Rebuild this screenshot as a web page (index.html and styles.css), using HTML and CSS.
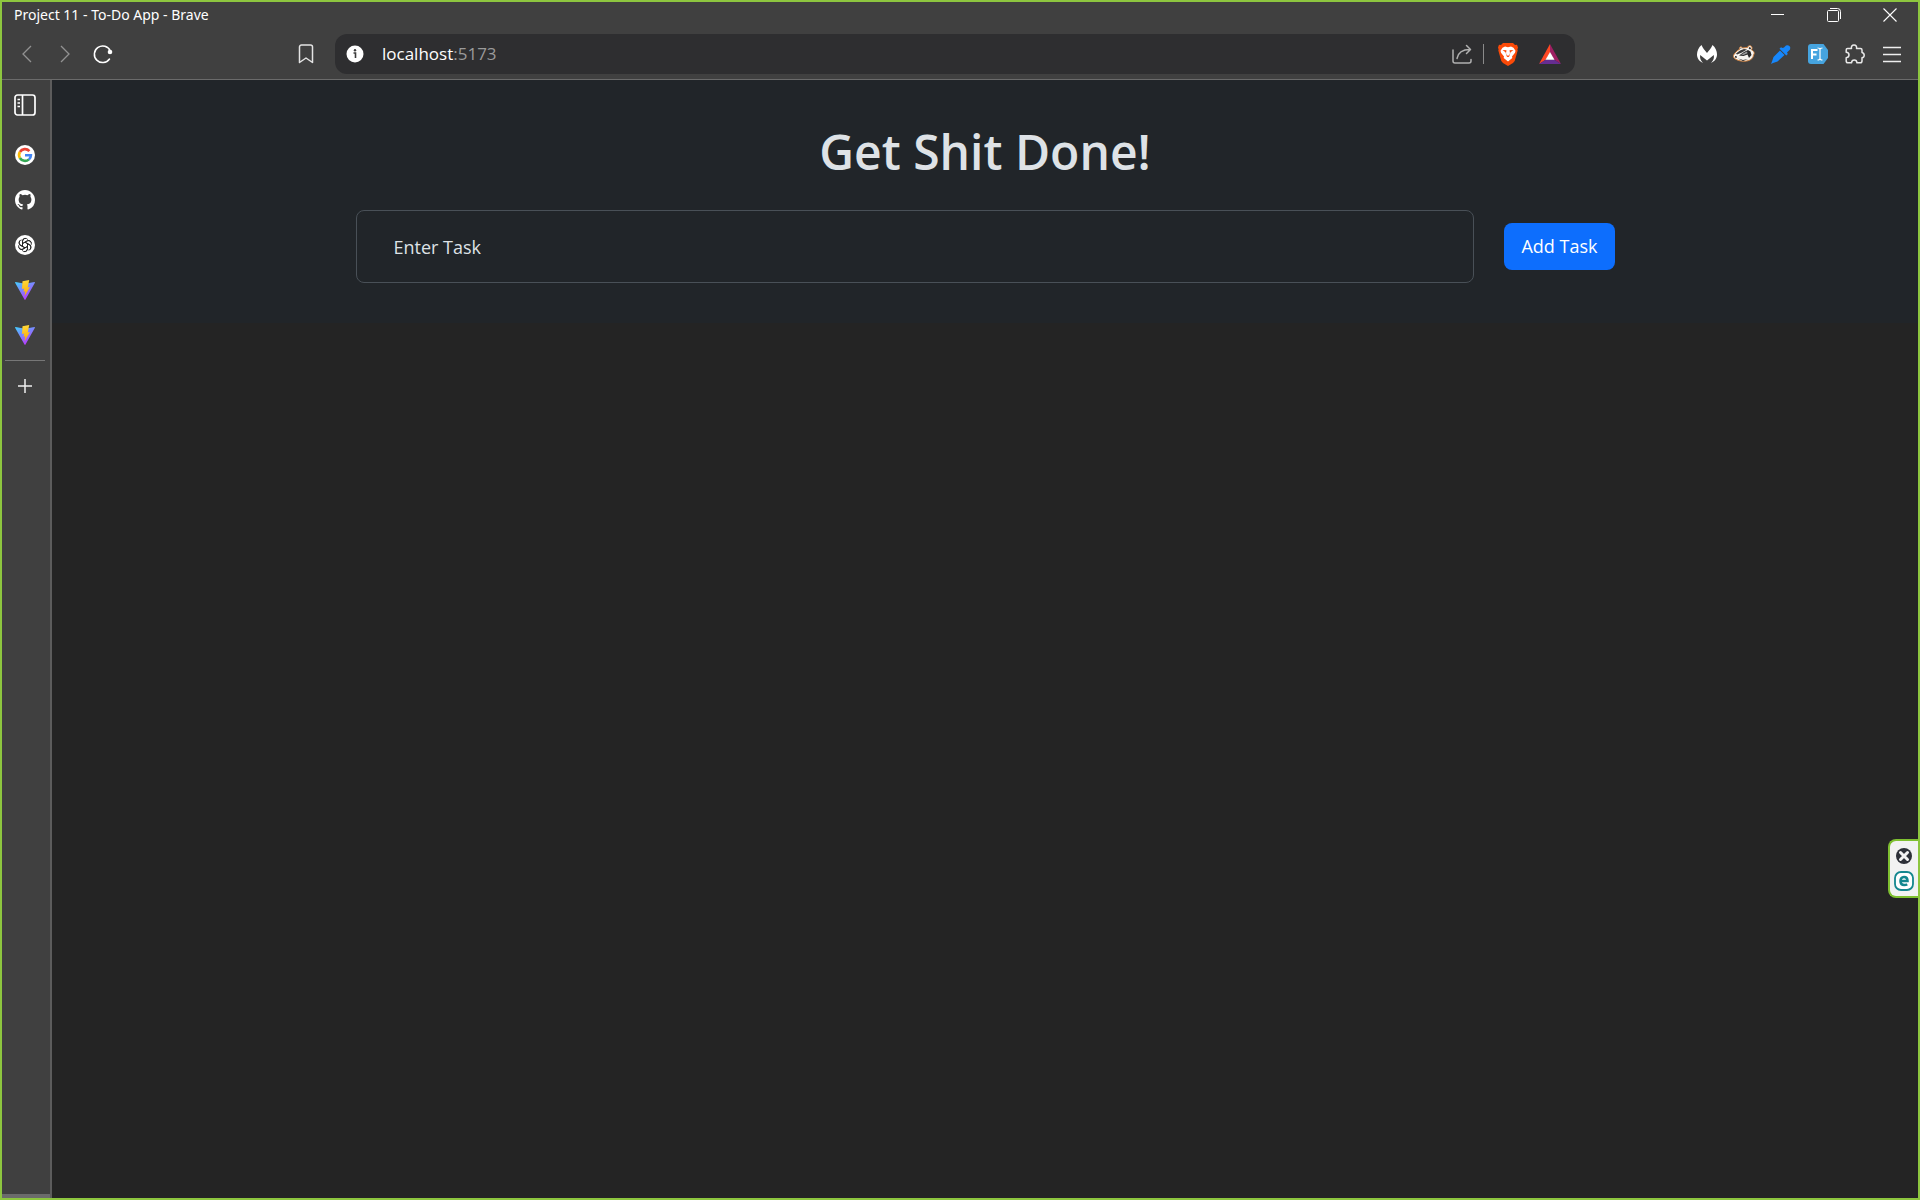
FILE: index.html
```html
<!DOCTYPE html>
<html lang="en">
<head>
<meta charset="utf-8">
<meta name="viewport" content="width=device-width, initial-scale=1">
<title>Project 11 - To-Do App</title>
<link rel="stylesheet" href="styles.css">
</head>
<body>
<div class="window">
  <header class="chrome">
    <div class="titlebar">
      <span class="title">Project 11 - To-Do App - Brave</span>
      <div class="window-controls">
        <button type="button" aria-label="Minimize"><svg width="14" height="14" viewBox="0 0 14 14"><path d="M0 6.500h13" stroke="#fff"/></svg></button>
        <button type="button" aria-label="Restore"><svg width="14" height="14" viewBox="0 0 14 14" fill="none" stroke="#fff"><path d="M3 .5h7.500a3 3 0 0 1 3 3V11"/><rect x=".5" y="2.500" width="11" height="11" rx="1"/></svg></button>
        <button type="button" aria-label="Close"><svg width="14" height="14" viewBox="0 0 14 14"><path d="M.5.500l13 13M13.500.500l-13 13" stroke="#fff" stroke-width="1.100"/></svg></button>
      </div>
    </div>
    <div class="toolbar">
      <div class="nav">
        <button type="button" aria-label="Back"><svg width="20" height="20" viewBox="0 0 20 20" fill="none" stroke="#929292" stroke-width="1.300"><path d="M14 2L6 10l8 8"/></svg></button>
        <button type="button" aria-label="Forward"><svg width="20" height="20" viewBox="0 0 20 20" fill="none" stroke="#929292" stroke-width="1.300"><path d="M6 2l8 8-8 8"/></svg></button>
        <button type="button" aria-label="Reload"><svg width="20" height="20" viewBox="0 0 20 20"><path d="M17.300 7A8.300 8.300 0 1 0 16.500 15" fill="none" stroke="#fff" stroke-width="1.500" stroke-linecap="round"/><circle cx="17" cy="8" r="2.300" fill="#fff"/></svg></button>
        <button type="button" class="bookmark" aria-label="Bookmark this page"><svg width="20" height="20" viewBox="0 0 20 20" fill="none" stroke="#e4e4e4" stroke-width="1.500" stroke-linejoin="round"><path d="M3.500 18.500V3a2 2 0 0 1 2-2h9a2 2 0 0 1 2 2v15.500L10 14z"/></svg></button>
      </div>
      <div class="omnibox">
        <button type="button" class="info" aria-label="View site information"><svg width="18" height="18" viewBox="0 0 18 18"><circle cx="9" cy="9" r="8.500" fill="#fff"/><path d="M7.500 8H9.500v5" fill="none" stroke="#3b3b3b" stroke-width="1.600"/><circle cx="9" cy="5.200" r="1.200" fill="#3b3b3b"/></svg></button>
        <div class="url" role="textbox" contenteditable="true" spellcheck="false" aria-label="Address">localhost<span class="port">:5173</span></div>
        <button type="button" class="share" aria-label="Share"><svg width="20" height="20" viewBox="0 0 20 20" fill="none" stroke="#b0b0b0" stroke-width="1.500" stroke-linecap="round" stroke-linejoin="round"><path d="M1 6v11a2 2 0 0 0 2 2h14a2 2 0 0 0 2-2v-1.500"/><path d="M5 14.500C6 9 9.500 5.500 18 5.500M14.500 1.500l4 4-4 4"/></svg></button>
        <span class="separator"></span>
        <button type="button" class="shields" aria-label="Brave Shields"><svg width="20" height="23" viewBox="0 0 20 23"><path d="M5 0h10l2 2 2-.2 1 2.700-.6 2 .3 1-3 10.500-1.700 2L10 23l-5-3-1.700-2L.3 7.500l.3-1L0 4.500l1-2.700 2 .2z" fill="#fb4a08"/><path d="M7 3.500l3 .7 3-.7 2.500 1.200 2 3-.5 2-3 3.800.3 1.500L10 18.500 5.700 15l.3-1.500L3 9.700l-.5-2 2-3z" fill="#fff"/><path d="M4.500 7l4 .3-.5 3 1 2.200h2l1-2.200-.5-3 4-.3-3 2.200-1.200 4L10 15l-1.300-1.800-1.200-4z" fill="#fb4a08"/><path d="M8.700 6h2.600l-.8 4.500h-1z" fill="#fff"/><path d="M7.500 15l2.500-1.300 2.500 1.300-2.500 2z" fill="#fff"/></svg></button>
        <button type="button" class="rewards" aria-label="Brave Rewards"><svg width="22" height="20" viewBox="0 0 22 20"><path d="M11 0L0 20l7-4.500 4-7z" fill="#ff4724"/><path d="M11 0l11 20-7-4.500-4-7z" fill="#9e1f63"/><path d="M0 20h22l-7-4.500H7z" fill="#662d91"/><path d="M11 8l4.500 7.700h-9z" fill="#fff"/></svg></button>
      </div>
      <div class="extensions">
        <button type="button" aria-label="Malwarebytes"><svg width="20" height="20" viewBox="0 0 20 20"><path d="M4.500 1C5.800 4 7.800 6.500 10 9c2.200-2.500 4.200-5 5.500-8C18.500 3.500 20 7 20 10.500c0 4-2.500 7-6 8.500 2.500-2.500 3.300-5 2.800-8L10 16.500 3.200 11c-.5 3 .3 5.500 2.800 8-3.500-1.500-6-4.500-6-8.500C0 7 1.500 3.500 4.500 1z" fill="#fff"/></svg></button>
        <button type="button" aria-label="Privacy Badger"><svg width="22" height="18" viewBox="0 0 22 18"><path d="M1 9.500C3 6.500 5 5 6.500 4.500 6 2 8 .8 9.500 3l5-.5C15 0 18.500 0 19 2.500c.3 1-.2 1.800-.6 2.300C21 6 22 8 20.500 10c-.5 4-4 6-8.500 6.200C7 16.500 3 15 1 12.800c-.9-1-.9-2.300 0-3.300z" fill="#f6f4f0" stroke="#cf7f3c"/><path d="M3 8.500L7 5.500l4-1.500 3 .5-5 3-5 2z" fill="#3a3a3a"/><path d="M6 10.500l5-3.500 4-2 2.500 1.500 1 3.500-2.500 3-1.500-3.500-4 1.500z" fill="#292929"/><path d="M8 9.500l6-3 .5 1.800-4 1.700z" fill="#999"/><path d="M2 11l2 .5-.5 1.500L2 12.500zM5 13.500l5 1.500 5-1-5 2z" fill="#222"/><path d="M15.500 3l1.500-1 1 1.500-1 1zM7.300 4l.4-1 1 .7z" fill="#1b1b1b"/></svg></button>
        <button type="button" aria-label="Color picker"><svg width="20" height="20" viewBox="0 0 20 20" fill="#1787fb"><path d="M13 3.500l2-2a3 3 0 0 1 4 4l-3 3 .8 1.500-1.500 1.500-6.800-6.800L10 3.200l1.500.8z"/><path d="M9 6.500l4.500 4.500-7 6.500-4.500 1.500-2 1 1-2.500 1.500-4.500z"/></svg></button>
        <button type="button" aria-label="Fonts Ninja"><svg width="20" height="20" viewBox="0 0 20 20"><path d="M3 0h12.500L20 6v8l-4.500 6H3a3 3 0 0 1-3-3V3a3 3 0 0 1 3-3z" fill="#46a4df"/><path d="M4 15V6h5.500M4 10.500h4.500" fill="none" stroke="#fff" stroke-width="2"/><path d="M9.500 4c1.500 0 2.500.3 2.500 1.500v9c0 1.200-1 1.500-2.500 1.500M14.500 4c-1.500 0-2.500.3-2.500 1.500v9c0 1.200 1 1.500 2.500 1.500" fill="none" stroke="#fff" stroke-width="1.200"/></svg></button>
        <button type="button" aria-label="Extensions"><svg width="20" height="20" viewBox="0 0 20 20" fill="none" stroke="#e8e8e8" stroke-width="1.500" stroke-linejoin="round"><path d="M2.500 4.500h4C6 2.500 7 1 9 1s3 1.500 2.500 3.500h4a1.500 1.500 0 0 1 1.500 1.500v2.500c1.500.3 2.200 1.300 2.200 2.700S18.500 13.500 17 13.700V17a1.800 1.800 0 0 1-1.800 1.800H12c-.2-1.800-1.200-2.800-2.700-2.800S6.700 17 6.500 18.800H3A1.800 1.800 0 0 1 1.200 17v-3.300c1.800-.2 2.800-1.200 2.800-2.700S3 8.500 1.200 8.300V6c0-1 .5-1.500 1.300-1.500z"/></svg></button>
        <button type="button" aria-label="Menu"><svg width="20" height="20" viewBox="0 0 20 20"><path d="M1 3.500h18M1 10.500h18M1 17.500h18" stroke="#eee" stroke-width="1.600"/></svg></button>
      </div>
    </div>
  </header>

  <div class="body">
    <nav class="sidebar" aria-label="Vertical tabs">
      <button type="button" class="panel-toggle" aria-label="Toggle tab panel"><svg width="22" height="22" viewBox="0 0 22 22"><rect x="1" y="1" width="20" height="20" rx="2.500" fill="none" stroke="#fff" stroke-width="1.700"/><path d="M8.500 1v20" stroke="#fff" stroke-width="1.700"/><path d="M3.500 5.500H6M3.500 9H6M3.500 12.500H6" stroke="#fff" stroke-width="1.500"/></svg></button>
      <button type="button" class="tab" aria-label="Google"><svg width="20" height="20" viewBox="0 0 20 20"><circle cx="10" cy="10" r="10" fill="#fff"/><g fill="none" stroke-width="2.600"><path d="M14.400 6.100A5.900 5.900 0 0 0 4.900 7" stroke="#ea4335"/><path d="M4.900 7a5.900 5.900 0 0 0 0 6" stroke="#fbbc05"/><path d="M4.900 13a5.900 5.900 0 0 0 9 1.400" stroke="#34a853"/><path d="M13.900 14.400a5.600 5.600 0 0 0 2-4.200H10" stroke="#4285f4"/></g></svg></button>
      <button type="button" class="tab" aria-label="GitHub"><svg width="20" height="20" viewBox="0 0 16 16"><path fill="#fff" d="M8 0C3.580 0 0 3.580 0 8c0 3.540 2.290 6.530 5.470 7.590.4.070.55-.17.55-.38 0-.19-.01-.82-.01-1.490-2.010.37-2.530-.49-2.690-.94-.09-.23-.48-.94-.82-1.130-.28-.15-.68-.52-.01-.53.63-.01 1.080.58 1.230.82.72 1.210 1.870.87 2.330.66.070-.52.28-.87.51-1.070-1.780-.2-3.640-.89-3.640-3.950 0-.87.31-1.590.82-2.150-.08-.2-.36-1.020.08-2.120 0 0 .67-.21 2.200.82a7.600 7.600 0 0 1 4 0c1.530-1.040 2.200-.82 2.200-.82.44 1.100.16 1.920.08 2.120.51.56.82 1.270.82 2.150 0 3.070-1.870 3.750-3.650 3.950.29.25.54.73.54 1.480 0 1.070-.01 1.930-.01 2.200 0 .21.15.46.55.38A8.010 8.010 0 0 0 16 8c0-4.420-3.580-8-8-8z"/></svg></button>
      <button type="button" class="tab" aria-label="ChatGPT"><svg width="20" height="20" viewBox="0 0 20 20"><circle cx="10" cy="10" r="10" fill="#fff"/><defs><path id="petal" d="M7.500 11.500V6.300a2.900 2.900 0 0 1 5.300-1.700M7.500 8.600l4.600-2.600a2.800 2.800 0 0 1 4 1.500"/></defs><g fill="none" stroke="#222" stroke-width=".9"><use href="#petal"/><use href="#petal" transform="rotate(60 10 10)"/><use href="#petal" transform="rotate(120 10 10)"/><use href="#petal" transform="rotate(180 10 10)"/><use href="#petal" transform="rotate(240 10 10)"/><use href="#petal" transform="rotate(300 10 10)"/></g></svg></button>
      <button type="button" class="tab" aria-label="Vite app"><svg width="20" height="20" viewBox="0 0 20 20"><defs><linearGradient id="vite-body" x1="0" y1="0" x2=".6" y2="1"><stop offset="0" stop-color="#41d1ff"/><stop offset="1" stop-color="#bd34fe"/></linearGradient><linearGradient id="vite-bolt" x1=".4" y1="0" x2=".5" y2="1"><stop offset="0" stop-color="#ffd93a"/><stop offset="1" stop-color="#ffa800"/></linearGradient></defs><path d="M.6 2l9.400 1.700L19.400 2c.5 0 .7.400.5.800l-9.400 16.800c-.2.400-.8.400-1 0L.1 2.800C-.1 2.400.2 2 .6 2z" fill="url(#vite-body)"/><path d="M14.200 0L7.500 1.300 7 9l2.200-.4-.7 3.200 1.800-.5-.8 5L15 7l-2.200.4z" fill="url(#vite-bolt)"/></svg></button>
      <button type="button" class="tab" aria-label="Project 11 - To-Do App"><svg width="20" height="20" viewBox="0 0 20 20"><path d="M.6 2l9.400 1.700L19.400 2c.5 0 .7.400.5.800l-9.400 16.800c-.2.400-.8.400-1 0L.1 2.800C-.1 2.400.2 2 .6 2z" fill="url(#vite-body)"/><path d="M14.200 0L7.500 1.300 7 9l2.200-.4-.7 3.200 1.800-.5-.8 5L15 7l-2.200.4z" fill="url(#vite-bolt)"/></svg></button>
      <hr>
      <button type="button" class="new-tab" aria-label="New tab"><svg width="14" height="14" viewBox="0 0 14 14"><path d="M7 0v14M0 7h14" stroke="#eee" stroke-width="1.500"/></svg></button>
      <div class="sidebar-foot"></div>
    </nav>

    <main class="page">
      <section class="todo">
        <h1>Get Shit Done!</h1>
        <form class="task-form">
          <input type="text" placeholder="Enter Task" aria-label="Enter Task">
          <button type="button" class="add">Add Task</button>
        </form>
      </section>
      <aside class="widget" aria-label="Page helper">
        <button type="button" aria-label="Dismiss"><svg width="16" height="16" viewBox="0 0 16 16"><circle cx="8" cy="8" r="8" fill="#2d3038"/><path d="M4.500 4.500l7 7M11.500 4.500l-7 7" stroke="#f2f2f2" stroke-width="3" stroke-linecap="round"/></svg></button>
        <button type="button" aria-label="Open helper"><svg width="20" height="20" viewBox="0 0 20 20" fill="none" stroke="#14878f"><rect x="1" y="1" width="18" height="18" rx="6" stroke-width="1.800" fill="#fff"/><path d="M6.500 10H13.500c0-2.700-1.200-4-3.500-4S6.500 7.500 6.500 10s1.300 4 3.700 4c1.300 0 2.200-.2 3-.8" stroke-width="2.600"/></svg></button>
      </aside>
    </main>
  </div>
</div>
</body>
</html>
```

FILE: styles.css
```css
* { box-sizing: border-box; }

body {
  margin: 0;
  font-family: "Open Sans", "Noto Sans", sans-serif;
  color: #dee2e6;
  background: #242424;
}

button {
  margin: 0;
  padding: 0;
  border: 0;
  background: none;
  font: inherit;
  color: inherit;
}

svg { display: block; }

.window {
  display: flex;
  flex-direction: column;
  min-height: 100vh;
  border: 2px solid #8dc63f;
}

/* Browser chrome */
.chrome {
  background: #404040;
  border-bottom: 1px solid #6b6b6b;
}

.titlebar {
  display: flex;
  justify-content: space-between;
  align-items: center;
  height: 25px;
  padding-left: 12px;
}

.title {
  font-family: "Noto Sans", sans-serif;
  font-size: 14px;
  line-height: 25px;
  color: #fff;
}

.window-controls { display: flex; }

.window-controls button {
  display: grid;
  place-items: center;
  width: 56px;
  height: 25px;
}

.toolbar {
  display: flex;
  align-items: center;
  padding: 7px 0 5px;
}

.nav {
  display: flex;
  flex: 0 0 333px;
  padding: 0 10px 0 6px;
}

.nav button,
.extensions button {
  display: grid;
  place-items: center;
  width: 38px;
  height: 40px;
}

.nav .bookmark { margin-left: auto; }

.omnibox {
  display: flex;
  flex: 1;
  align-items: center;
  height: 40px;
  padding: 0 14px 0 11px;
  border-radius: 12px;
  background: #2e2e30;
}

.url {
  flex: 1;
  margin-left: 18px;
  font-size: 17px;
  line-height: 24px;
  color: #fff;
  outline: 0;
}

.port { color: #9a9a9a; }

.separator {
  width: 1px;
  height: 20px;
  margin: 0 14px 0 11px;
  background: #8a8a8a;
}

.rewards { margin-left: 21px; }

.extensions {
  display: flex;
  flex: 0 0 343px;
  justify-content: flex-end;
  padding-right: 8px;
}

.extensions button { width: 37px; }

/* Sidebar and page */
.body {
  display: flex;
  flex: 1;
}

.sidebar {
  display: flex;
  flex: 0 0 50px;
  flex-direction: column;
  align-items: center;
  padding: 11px 2px 0 0;
  border-right: 2px solid #5c5c5c;
  background: #404040;
}

.panel-toggle { padding: 3px 0; margin-bottom: 13px; }

.tab {
  display: grid;
  place-items: center;
  width: 40px;
  height: 45px;
}

.sidebar hr {
  width: 40px;
  height: 1px;
  margin: 3px 0 18px;
  border: 0;
  background: #777;
}

.sidebar-foot {
  align-self: stretch;
  height: 4px;
  margin: auto -2px 0 0;
  background: #6b6b6b;
}

.page {
  position: relative;
  flex: 1;
  background: #242424;
}

.todo {
  padding: 42px 24px 40px;
  background: #212529;
}

h1 {
  margin: 0 0 28px;
  font-size: 48px;
  font-weight: 600;
  line-height: 60px;
  text-align: center;
}

.task-form {
  display: flex;
  align-items: center;
  gap: 30px;
  max-width: 1259px;
  margin: 0 auto;
}

.task-form input {
  flex: 1;
  min-width: 0;
  height: 73px;
  padding: 0 37px;
  border: 1px solid #495057;
  border-radius: 8px;
  background: #212529;
  font: inherit;
  font-size: 18px;
  color: #dee2e6;
  outline: 0;
}

.task-form input::placeholder {
  color: #dee2e6;
  opacity: 1;
}

.add {
  padding: 10px 17px;
  border-radius: 8px;
  background: #0d6efd;
  font-size: 18px;
  line-height: 27px;
  color: #fff;
}

/* Floating helper pinned to the page's right edge */
.widget {
  position: absolute;
  right: 0;
  top: 68%;
  display: flex;
  flex-direction: column;
  align-items: center;
  gap: 7px;
  margin-top: -1px;
  padding: 7px 4px 5px;
  border: 2px solid #7fc031;
  border-right: 0;
  border-radius: 8px 0 0 8px;
  background: #f2f2f2;
}
```
